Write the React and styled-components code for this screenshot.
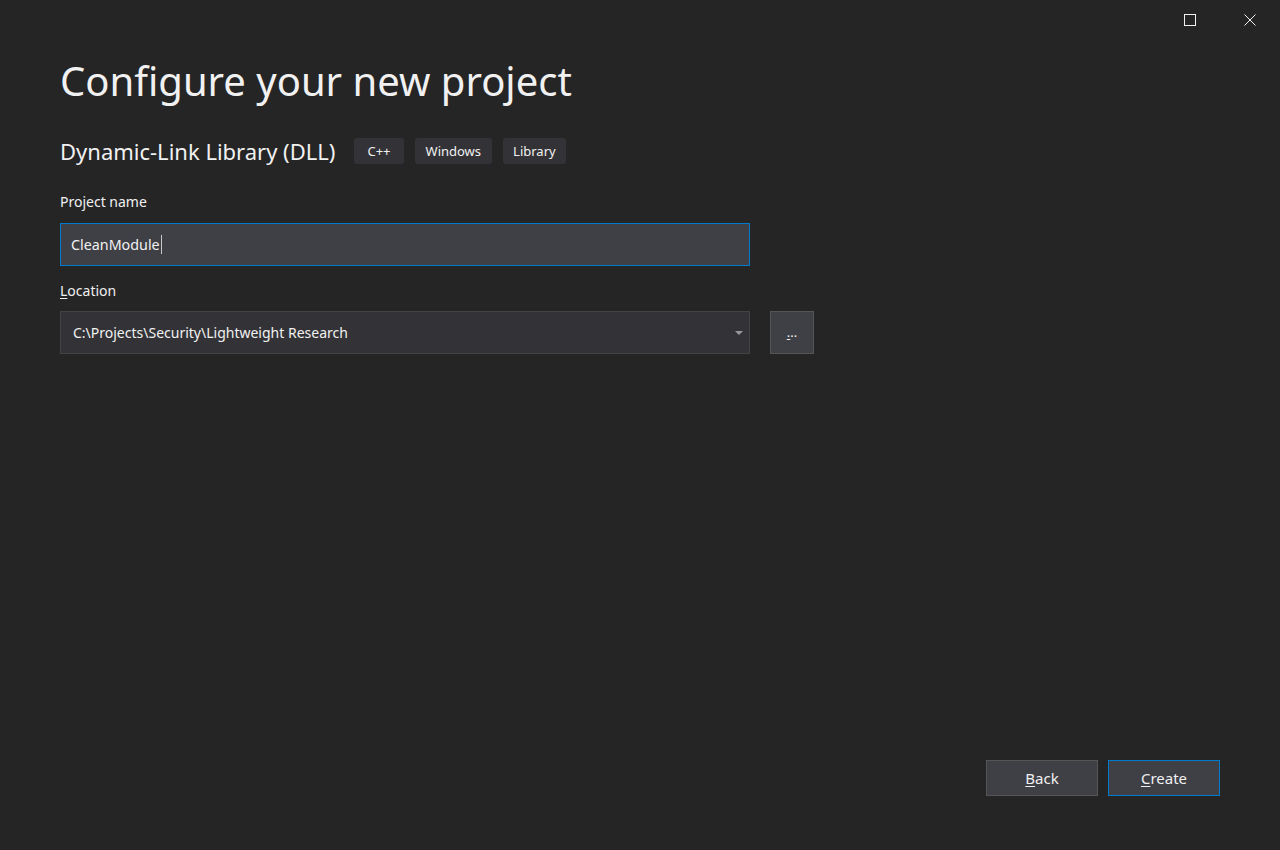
import React from "react";
import styled, { createGlobalStyle } from "styled-components";

const GlobalStyle = createGlobalStyle`
  html, body {
    margin: 0;
    padding: 0;
    background: #252526;
  }
  body {
    font-family: "Noto Sans", "Open Sans", "Liberation Sans", sans-serif;
    color: #f1f1f1;
  }
`;

const Window = styled.div`
  width: 1280px;
  height: 850px;
  background: #252526;
  display: flex;
  flex-direction: column;
  box-sizing: border-box;
`;

const TitleBar = styled.div`
  height: 40px;
  display: flex;
  justify-content: flex-end;
`;

const CaptionButton = styled.div`
  width: 60px;
  height: 40px;
  display: flex;
  align-items: center;
  justify-content: center;
  color: #f1f1f1;
`;

const Content = styled.div`
  flex: 1;
  display: flex;
  flex-direction: column;
  padding: 14px 60px 54px 60px;
`;

const Heading = styled.h1`
  margin: 0;
  font-size: 40px;
  font-weight: 400;
  line-height: 54px;
  color: #f1f1f1;
`;

const TemplateRow = styled.div`
  display: flex;
  align-items: center;
  margin-top: 28px;
  height: 30px;
`;

const TemplateName = styled.div`
  font-size: 22px;
  line-height: 30px;
  margin-right: 19px;
  color: #f1f1f1;
`;

const Tag = styled.span`
  height: 26px;
  padding: 0 ${(p) => p.$pad || 11}px;
  margin-right: 11px;
  border-radius: 3px;
  background: #333337;
  font-size: 13px;
  display: flex;
  align-items: center;
  color: #f1f1f1;
`;

const Label = styled.div`
  font-size: 14px;
  line-height: 20px;
  margin-top: ${(p) => p.$top}px;
  margin-bottom: ${(p) => p.$below}px;
  color: #f1f1f1;
`;

const FieldRow = styled.div`
  display: flex;
  align-items: center;
  gap: 20px;
`;

const TextBox = styled.div`
  width: 690px;
  height: 43px;
  box-sizing: border-box;
  display: flex;
  align-items: center;
  padding: 0 ${(p) => (p.$combo ? 12 : 10)}px;
  font-size: ${(p) => (p.$combo ? 14 : 14.3)}px;
  background: ${(p) => (p.$combo ? "#333337" : "#3f3f46")};
  border: 1px solid ${(p) => (p.$focus ? "#007acc" : "#434346")};
  color: #f1f1f1;
  position: relative;
`;

const Caret = styled.span`
  display: inline-block;
  width: 1px;
  height: 19px;
  background: #c8c8c8;
  margin-left: 1px;
`;

const Arrow = styled.span`
  position: absolute;
  right: 6px;
  top: 19px;
  width: 0;
  height: 0;
  border-left: 4px solid transparent;
  border-right: 4px solid transparent;
  border-top: 4px solid #999999;
`;

const BrowseButton = styled.div`
  width: 44px;
  height: 43px;
  box-sizing: border-box;
  background: #3f3f46;
  border: 1px solid #555555;
  display: flex;
  align-items: center;
  justify-content: center;
  font-size: 13px;
  color: #f1f1f1;
  padding-bottom: 2px;
`;

const Footer = styled.div`
  margin-top: auto;
  display: flex;
  justify-content: flex-end;
  gap: 10px;
`;

const Button = styled.div`
  width: 112px;
  height: 36px;
  box-sizing: border-box;
  background: #3f3f46;
  border: 1px solid ${(p) => (p.$primary ? "#007acc" : "#555555")};
  display: flex;
  align-items: center;
  justify-content: center;
  font-size: 15px;
  color: #f1f1f1;
`;

const Key = styled.u`
  text-underline-offset: 2px;
`;

export default function App() {
  return (
    <>
      <GlobalStyle />
      <Window>
        <TitleBar>
          <CaptionButton>
            <svg width="12" height="12" viewBox="0 0 12 12">
              <rect x="0.5" y="0.5" width="11" height="11" fill="none" stroke="#f1f1f1" strokeWidth="1" />
            </svg>
          </CaptionButton>
          <CaptionButton>
            <svg width="12" height="12" viewBox="0 0 12 12">
              <path d="M0.5 0.5L11.5 11.5M11.5 0.5L0.5 11.5" stroke="#f1f1f1" strokeWidth="1" />
            </svg>
          </CaptionButton>
        </TitleBar>
        <Content>
          <Heading>Configure your new project</Heading>
          <TemplateRow>
            <TemplateName>Dynamic-Link Library (DLL)</TemplateName>
            <Tag $pad={13}>C++</Tag>
            <Tag $pad={11}>Windows</Tag>
            <Tag $pad={10}>Library</Tag>
          </TemplateRow>
          <Label $top={26} $below={11}>Project name</Label>
          <FieldRow>
            <TextBox $focus>
              CleanModule
              <Caret />
            </TextBox>
          </FieldRow>
          <Label $top={15} $below={10}>
            <Key>L</Key>ocation
          </Label>
          <FieldRow>
            <TextBox $combo>
              C:\Projects\Security\Lightweight Research
              <Arrow />
            </TextBox>
            <BrowseButton>
              <Key>.</Key>..
            </BrowseButton>
          </FieldRow>
          <Footer>
            <Button>
              <Key>B</Key>ack
            </Button>
            <Button $primary>
              <Key>C</Key>reate
            </Button>
          </Footer>
        </Content>
      </Window>
    </>
  );
}
